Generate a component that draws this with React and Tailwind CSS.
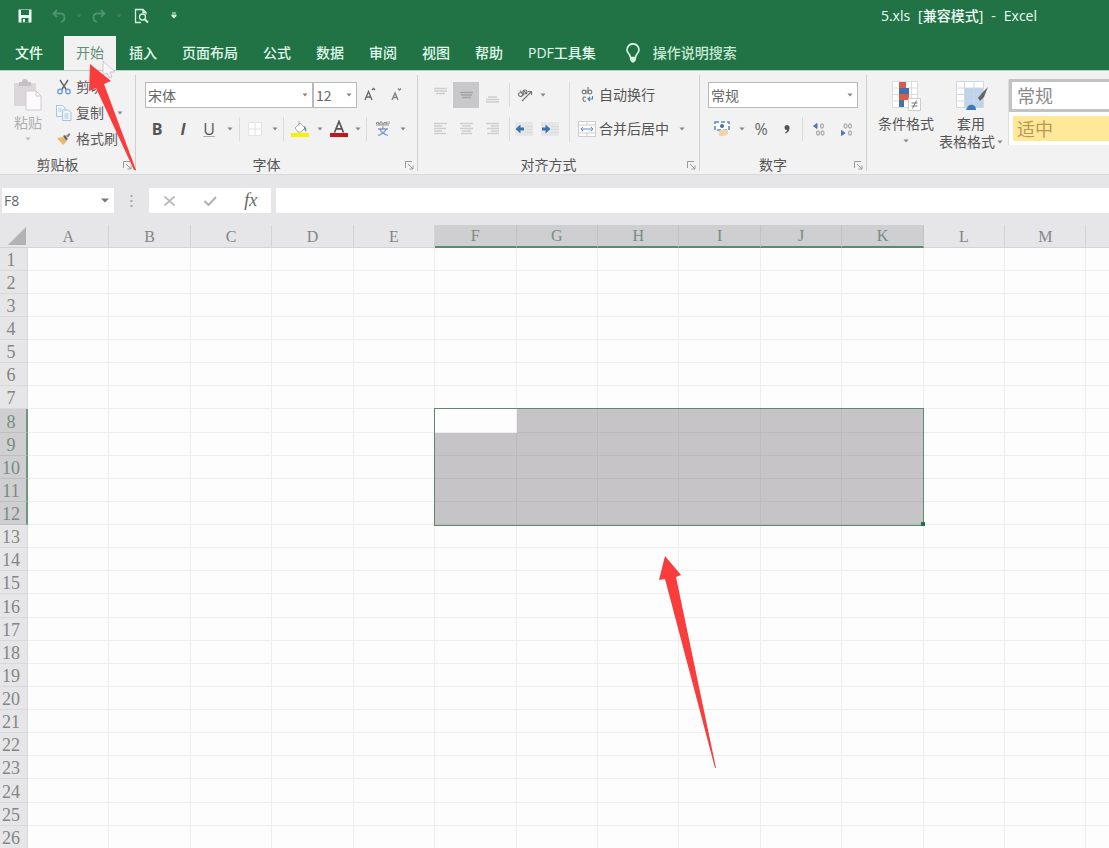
import React from "react";

const COLUMNS = ["A", "B", "C", "D", "E", "F", "G", "H", "I", "J", "K", "L", "M", ""];
const ROWS = Array.from({ length: 26 }, (_, i) => i + 1);
const TABS = ["文件", "开始", "插入", "页面布局", "公式", "数据", "审阅", "视图", "帮助", "PDF工具集"];

const colSelected = (c) => c >= 5 && c <= 10;
const rowSelected = (r) => r >= 8 && r <= 12;

function Caret({ className = "text-[#858585]" }) {
  return (
    <svg width="6" height="4" viewBox="0 0 6 4" className={className} aria-hidden="true">
      <path d="M0.5 0.5h5L3 3.5z" fill="currentColor" />
    </svg>
  );
}

function DropButton({ label, className = "w-3" }) {
  return (
    <button aria-label={label} className={`flex h-6 shrink-0 items-center justify-center ${className}`}>
      <Caret />
    </button>
  );
}

function ToolButton({ label, className = "w-[26px]", children }) {
  return (
    <button aria-label={label} className={`flex h-[26px] shrink-0 items-center justify-center ${className}`}>
      {children}
    </button>
  );
}

function Divider({ className = "mx-[2px]" }) {
  return <span className={`h-6 w-px shrink-0 bg-[#dcdcdc] ${className}`} />;
}

function Combo({ label, value, className }) {
  return (
    <label className={`relative block h-[26px] ${className}`}>
      <span className="sr-only">{label}</span>
      <select
        defaultValue={value}
        className="h-full w-full appearance-none overflow-visible border border-[#b9b9b9] bg-white py-0 pl-[2px] font-['Noto_Sans_CJK_SC',sans-serif] text-sm leading-6 text-[#666] outline-none"
      >
        <option>{value}</option>
      </select>
      <span className="pointer-events-none absolute inset-y-0 right-[5px] flex items-center">
        <Caret />
      </span>
    </label>
  );
}

function Group({ title, className = "", children }) {
  return (
    <section className="flex shrink-0">
      <div className={`flex flex-col ${className}`}>
        <div className="h-[85px] pt-[11px]">{children}</div>
        <div className="flex h-[18px] items-center">
          <h2 className="flex-1 pr-1 text-center text-sm leading-[18px] text-[#555]">{title}</h2>
          <button aria-label={`${title}设置`} className="flex w-4 justify-center">
            <svg width="9" height="9" viewBox="0 0 9 9" fill="none" stroke="#999" aria-hidden="true">
              <path d="M0.5 7V0.5H7M3 3l5 5M8 4.5V8H4.5" />
            </svg>
          </button>
        </div>
      </div>
      <span className="mt-1 h-[96px] w-px bg-[#d0d0d0]" />
    </section>
  );
}

function TitleBar() {
  return (
    <header className="flex h-9 items-center pr-[72px] pb-[5px] text-white">
      <div className="flex items-center pl-3">
        <ToolButton label="保存">
          <svg width="14" height="14" viewBox="0 0 14 14" aria-hidden="true">
            <path d="M0.5 0.5h13v13H0.5z" fill="#e8fff3" />
            <path d="M3 1h8v5H3zM3.5 9h7v4.5h-7z" fill="#217346" />
            <path d="M5 10h2v3H5z" fill="#e8fff3" />
          </svg>
        </ToolButton>
        <ToolButton label="撤消" className="ml-2 w-[26px]">
          <svg width="14" height="14" viewBox="0 0 14 14" fill="none" stroke="#4f9273" strokeWidth="1.8" aria-hidden="true">
            <path d="M5 1L1.5 4.5 5 8M2 4.500h6.500c5 0 5.500 7 0.500 8.500" />
          </svg>
        </ToolButton>
        <DropButton label="撤消选项" className="w-[14px] opacity-40" />
        <ToolButton label="恢复">
          <svg width="14" height="14" viewBox="0 0 14 14" fill="none" stroke="#4f9273" strokeWidth="1.8" aria-hidden="true">
            <path d="M9 1l3.500 3.500L9 8M12 4.500H5.500c-5 0-5.500 7-0.500 8.500" />
          </svg>
        </ToolButton>
        <DropButton label="恢复选项" className="w-[14px] opacity-40" />
        <ToolButton label="打印预览" className="ml-[2px] w-[26px]">
          <svg width="15" height="16" viewBox="0 0 15 16" fill="none" stroke="#d5f3e3" strokeWidth="1.3" aria-hidden="true">
            <path d="M7 14.500H1.500V1.500h7.500l3 3v2M9 1.500V4.500h3" />
            <circle cx="8.500" cy="9" r="3" />
            <path d="M10.700 11.200l3.300 3.300" strokeWidth="2" />
          </svg>
        </ToolButton>
        <button aria-label="自定义快速访问工具栏" className="ml-[10px] flex h-6 w-5 items-center justify-center">
          <svg width="6" height="7" viewBox="0 0 6 7" fill="#d5f3e3" aria-hidden="true">
            <path d="M1 0.500h4v1H1zM0.500 2.500h5v1.500L3 6.500 0.500 4z" />
          </svg>
        </button>
      </div>
      <h1 className="ml-auto flex gap-2 text-sm font-medium text-[#effff6]">
        <span>5.xls</span>
        <span>[兼容模式]</span>
        <span>-</span>
        <span>Excel</span>
      </h1>
    </header>
  );
}

function TabBar() {
  return (
    <nav className="flex h-[34px] gap-px text-sm font-medium">
      {TABS.map((t, i) => (
        <button
          key={t}
          className={
            i === 0
              ? "pr-5 pl-[15px] text-[#e8fff2]"
              : i === 1
                ? "bg-[#f3f2f3] px-3 font-normal text-[#5f8f76]"
                : "px-3 text-[#e0f8eb]"
          }
        >
          {t}
        </button>
      ))}
      <button className="flex items-center gap-[13px] pl-[17px] text-[#c8e8d8]">
        <svg width="14" height="20" viewBox="0 0 14 20" fill="none" stroke="#d5f5e4" strokeWidth="1.700" aria-hidden="true">
          <path d="M4.500 14.500C4.500 11 1 10.500 1 6.800a6 6 0 0 1 12 0C13 10.500 9.500 11 9.500 14.500z" />
          <path d="M4 14h6v3l-2 2.500H6L4 17z" fill="#d5f5e4" stroke="none" />
        </svg>
        操作说明搜索
      </button>
    </nav>
  );
}

function ClipboardGroup() {
  return (
    <Group title="剪贴板" className="w-[135px]">
      <div className="-mt-1 flex">
        <button className="flex w-14 flex-col items-center text-sm leading-5 text-[#b0b0b0]">
          <svg width="30" height="34" viewBox="0 0 30 34" aria-hidden="true">
            <path d="M1 5h22v23H1z" fill="#dcd7db" />
            <path d="M6 4h3a3 3 0 0 1 6 0h3v4H6z" fill="#c4c1c4" />
            <path d="M13 13h10l5 5v14H13z" fill="#fcfafc" stroke="#d0ccd0" />
            <path d="M23 13v5h5" fill="none" stroke="#d0ccd0" />
          </svg>
          <span className="mt-px">粘贴</span>
          <span className="flex h-3 items-center">
            <Caret className="text-[#bbb]" />
          </span>
        </button>
        <div className="flex flex-col text-sm text-[#5c5c5c]">
          <button className="-mt-1 flex h-[26px] items-center gap-1">
            <svg width="16" height="16" viewBox="0 0 16 16" fill="none" aria-hidden="true">
              <path d="M4 1l6.500 10M12 1L5.500 11" stroke="#5d6570" strokeWidth="1.400" />
              <circle cx="4" cy="12.500" r="2.200" stroke="#6fa0cf" strokeWidth="1.400" />
              <circle cx="12" cy="12.500" r="2.200" stroke="#6fa0cf" strokeWidth="1.400" />
            </svg>
            剪切
          </button>
          <div className="flex items-center">
            <button className="flex h-[26px] items-center gap-1">
              <svg width="16" height="16" viewBox="0 0 16 16" fill="#eef5fc" stroke="#a9c4de" aria-hidden="true">
                <path d="M0.500 0.500h6l2.500 2.500v8.500H0.500z" />
                <path d="M6.500 5h6l2.500 2.500v8H6.500z" />
                <path d="M8.500 9h4M8.500 11h4M8.500 13h4M2.500 4h3M2.500 6h3" />
              </svg>
              复制
            </button>
            <DropButton label="复制选项" className="ml-[10px] w-3" />
          </div>
          <button className="flex h-[26px] items-center gap-1">
            <svg width="16" height="16" viewBox="0 0 16 16" aria-hidden="true">
              <path d="M1 7l6-1 4 4-4 4z" fill="#edb868" />
              <path d="M7 5l2-1 3 4-2 1.500z" fill="#666" />
              <path d="M10 5l3-3 1.500 1.500-2.500 3z" fill="#888" />
            </svg>
            格式刷
          </button>
        </div>
      </div>
    </Group>
  );
}

function FontGroup() {
  return (
    <Group title="字体" className="w-[281px]">
      <div className="flex pl-[9px]">
        <Combo label="字体" value="宋体" className="w-[168px]" />
        <Combo label="字号" value="12" className="w-11" />
        <ToolButton label="增大字号">
          <svg width="12" height="16" viewBox="0 0 12 16" fill="none" stroke="#6a6a6a" strokeWidth="1.400" aria-hidden="true">
            <path d="M1 13l3.500-8.500L8 13M2.300 10h4.400M8 3l1.500-1.500L11 3" />
          </svg>
        </ToolButton>
        <ToolButton label="减小字号">
          <svg width="12" height="16" viewBox="0 0 12 16" fill="none" stroke="#808080" strokeWidth="1.300" aria-hidden="true">
            <path d="M2 13l3-7L8 13M3 10.500h4M8 1.500L9.500 3 11 1.500" />
          </svg>
        </ToolButton>
      </div>
      <div className="mt-2 flex items-center pl-2 text-base leading-6 text-[#555]">
        <ToolButton label="加粗">
          <b>B</b>
        </ToolButton>
        <ToolButton label="倾斜">
          <i className="font-bold">I</i>
        </ToolButton>
        <ToolButton label="下划线">
          <u className="decoration-[#aaa]">U</u>
        </ToolButton>
        <DropButton label="下划线选项" className="w-4" />
        <Divider className="mx-px" />
        <ToolButton label="边框" className="w-7">
          <svg width="14" height="14" viewBox="0 0 14 14" fill="#fff" stroke="#e2e2e2" aria-hidden="true">
            <path d="M0.500 0.500h13v13H0.500zM7 0.500v13M0.500 7h13" />
          </svg>
        </ToolButton>
        <DropButton label="边框选项" />
        <Divider />
        <ToolButton label="填充颜色" className="w-7">
          <svg width="18" height="18" viewBox="0 0 18 18" aria-hidden="true">
            <path d="M4 8l5-5 5 5-4 4H7z" fill="#fff" stroke="#a9a9a9" />
            <path d="M8 1v5" stroke="#a9a9a9" />
            <path d="M13 6q3 1 2 6-2-2-2-6z" fill="#5a86b5" />
            <path d="M0 13h18v4H0z" fill="#f8f200" />
          </svg>
        </ToolButton>
        <DropButton label="填充颜色选项" />
        <ToolButton label="字体颜色">
          <svg width="18" height="18" viewBox="0 0 18 18" fill="none" aria-hidden="true">
            <path d="M4.500 12.500L9 1.500l4.500 11M6 8.800h6" stroke="#555" strokeWidth="1.700" />
            <path d="M0 13h18v4H0z" fill="#c8141c" />
          </svg>
        </ToolButton>
        <DropButton label="字体颜色选项" />
        <Divider />
        <ToolButton label="拼音指南" className="w-7">
          <svg width="14" height="16" viewBox="0 0 14 16" fill="none" aria-hidden="true">
            <path d="M0.500 3V1.500h2V3h1.500V1h2v2h2V1.500h2V3h1V0.500M13 0.500V3M0 4h13" stroke="#8b8b8b" />
            <path d="M7 5.500v2M2 8h10M4 8.500q2 4 8 6M10 8.500q-2 4-8 6" stroke="#7b9bc9" strokeWidth="1.300" />
          </svg>
        </ToolButton>
        <DropButton label="拼音选项" />
      </div>
    </Group>
  );
}

const LINES = {
  top: "M1 1.500h13M1 4h13M3 6.500h9",
  middle: "M1 5.500h13M2 8h11M3 10.500h9",
  bottom: "M3 10h9M1 12.500h13M1 15h13",
  left: "M1 2.500h13M1 5h8M1 7.500h12M1 10h8M1 12.500h12",
  center: "M1 2.500h13M3 5h9M1 7.500h13M3 10h9M2 12.500h11",
  right: "M1 2.500h13M6 5h8M2 7.500h12M6 10h8M2 12.500h12",
};

function LinesIcon({ kind, className = "text-[#cecece]" }) {
  return (
    <svg width="15" height="16" viewBox="0 0 15 16" fill="none" stroke="currentColor" strokeWidth="1.600" className={className} aria-hidden="true">
      <path d={LINES[kind]} />
    </svg>
  );
}

function IndentIcon({ inward }) {
  return (
    <svg width="18" height="14" viewBox="0 0 18 14" aria-hidden="true">
      <path d="M0 0h18v14H0z" fill="#e6e6e6" />
      <path d="M10 4.500h8M10 7.500h8M10 10.500h8" stroke="#dadada" fill="none" />
      <path d={inward ? "M1 7h6" : "M9 7H3"} stroke="#3974ae" strokeWidth="3" fill="none" />
      <path d={inward ? "M4.500 2.500L9.500 7l-5 4.500z" : "M5.500 2.500L0.500 7l5 4.500z"} fill="#3974ae" />
    </svg>
  );
}

function AlignGroup() {
  return (
    <Group title="对齐方式" className="w-[281px]">
      <div className="flex pl-[9px]">
        <div className="flex flex-col gap-2">
          <div className="flex">
            <ToolButton label="顶端对齐"><LinesIcon kind="top" /></ToolButton>
            <ToolButton label="垂直居中" className="w-[26px] bg-[#c8c7c9]">
              <LinesIcon kind="middle" className="text-[#a3a2a4]" />
            </ToolButton>
            <ToolButton label="底端对齐"><LinesIcon kind="bottom" /></ToolButton>
          </div>
          <div className="flex">
            <ToolButton label="左对齐"><LinesIcon kind="left" /></ToolButton>
            <ToolButton label="居中"><LinesIcon kind="center" /></ToolButton>
            <ToolButton label="右对齐"><LinesIcon kind="right" /></ToolButton>
          </div>
        </div>
        <div className="ml-[3px] flex flex-col gap-2">
          <div className="flex items-center">
            <Divider className="mx-px" />
            <ToolButton label="方向" className="w-7">
              <svg width="16" height="16" viewBox="0 0 16 16" fill="none" stroke="#777" strokeWidth="1.200" aria-hidden="true">
                <circle cx="3.500" cy="7.500" r="2" />
                <path d="M3 3.500l4 5M6 3l4 4" />
                <circle cx="8" cy="5" r="2" />
                <path d="M5 14l9-9M11 4.500h3.500V8" />
              </svg>
            </ToolButton>
            <DropButton label="方向选项" className="w-2" />
          </div>
          <div className="flex items-center">
            <Divider className="mx-px" />
            <ToolButton label="减少缩进"><IndentIcon /></ToolButton>
            <ToolButton label="增加缩进"><IndentIcon inward /></ToolButton>
          </div>
        </div>
        <span className="ml-[6px] h-[60px] w-px bg-[#dcdcdc]" />
        <div className="ml-2 flex flex-col gap-2 text-sm text-[#555]">
          <button className="flex h-[26px] items-center gap-[3px]">
            <svg width="18" height="18" viewBox="0 0 18 18" fill="none" stroke="#7b7b7b" strokeWidth="1.200" aria-hidden="true">
              <circle cx="6" cy="6" r="1.800" />
              <path d="M8 4v4M10 1v7" />
              <circle cx="12" cy="6" r="1.800" />
              <path d="M8 11.500q-3-1.500-3 1.500t3 2" />
              <path d="M14.500 10v3h-4M12 11l-2 2 2 2" stroke="#4f86ba" />
            </svg>
            自动换行
          </button>
          <div className="flex items-center">
            <button className="flex h-[26px] items-center gap-[3px]">
              <svg width="18" height="16" viewBox="0 0 18 16" fill="#fff" stroke="#cdcdcd" aria-hidden="true">
                <path d="M0.500 0.500h17v15H0.500zM0.500 4h17M0.500 12h17M9 0.500V4M9 12v3.500" />
                <path d="M3 8h12M5 6L3 8l2 2M13 6l2 2-2 2" stroke="#5a8dc0" fill="none" />
              </svg>
              合并后居中
            </button>
            <DropButton label="合并选项" className="ml-[7px] w-3" />
          </div>
        </div>
      </div>
    </Group>
  );
}

function NumberGroup() {
  return (
    <Group title="数字" className="w-[166px]">
      <div className="pl-2">
        <Combo label="数字格式" value="常规" className="w-[150px]" />
        <div className="mt-2 flex items-center text-base leading-6 text-[#666]">
          <ToolButton label="会计数字格式" className="w-7">
            <svg width="16" height="16" viewBox="0 0 16 16" fill="none" aria-hidden="true">
              <path d="M1 1h14v8H1z" fill="#fff" stroke="#5a8dc0" strokeWidth="1.600" strokeDasharray="4 2" />
              <circle cx="8" cy="5" r="2" fill="#456f9e" />
              <path d="M5 10q3-3 9-1v4q-4 3-9 2z" fill="#f4d3ae" />
            </svg>
          </ToolButton>
          <DropButton label="会计格式选项" />
          <ToolButton label="百分比样式">%</ToolButton>
          <ToolButton label="千位分隔样式">
            <svg width="6" height="9" viewBox="0 0 6 9" fill="#555" aria-hidden="true">
              <path d="M3 0a2.500 2.500 0 0 1 2.500 3q0 4-4 5.500L1 7.500Q3 6.500 3 5A2.500 2.500 0 0 1 3 0z" />
            </svg>
          </ToolButton>
          <Divider />
          <ToolButton label="增加小数位数" className="w-7">
            <svg width="12" height="13" viewBox="0 0 12 13" fill="none" stroke="#b0b0b0" strokeWidth="1.300" aria-hidden="true">
              <path d="M0.500 3L4 0.500v5z" fill="#4f78b8" stroke="#4f78b8" strokeWidth="1" />
              <ellipse cx="9" cy="3" rx="1.500" ry="2" />
              <ellipse cx="5" cy="10" rx="1.500" ry="2" />
              <ellipse cx="9.500" cy="10" rx="1.500" ry="2" />
            </svg>
          </ToolButton>
          <ToolButton label="减少小数位数">
            <svg width="13" height="13" viewBox="0 0 13 13" fill="none" stroke="#b0b0b0" strokeWidth="1.300" aria-hidden="true">
              <ellipse cx="5.500" cy="3" rx="1.500" ry="2" />
              <ellipse cx="10" cy="3" rx="1.500" ry="2" />
              <path d="M5 10L1.500 7.500v5z" fill="#4f78b8" stroke="#4f78b8" strokeWidth="1" />
              <ellipse cx="10" cy="10" rx="1.500" ry="2" />
            </svg>
          </ToolButton>
        </div>
      </div>
    </Group>
  );
}

function StylesGroup() {
  return (
    <section className="flex min-w-0 flex-1 overflow-hidden pt-2 text-sm text-[#555]">
      <button className="ml-[10px] flex w-[58px] shrink-0 flex-col items-center leading-[18px]">
        <svg width="30" height="30" viewBox="0 0 30 30" className="mt-[2px]" aria-hidden="true">
          <path d="M1 1h26v25H1z" fill="#fff" />
          <path d="M1.500 0.500h25v26h-25zM1 7h26M1 13.500h26M1 20h26M20.500 1v26" fill="none" stroke="#dcdcdc" />
          <path d="M8 1h7v6H8zM8 13h10v6H8z" fill="#d95c4b" />
          <path d="M8 7h10v6H8zM8 19h5v7H8z" fill="#4472a8" />
          <path d="M17.500 17.500h12v12h-12z" fill="#fff" stroke="#ccc" />
          <path d="M20.500 22h6M20.500 25h6M25.500 19.500l-4 8" stroke="#777" fill="none" />
        </svg>
        <span className="mt-1">条件格式</span>
        <span className="flex h-4 items-center">
          <Caret />
        </span>
      </button>
      <button className="ml-1 flex w-[65px] shrink-0 flex-col items-start leading-[18px]">
        <svg width="32" height="30" viewBox="0 0 32 30" className="mt-[2px] ml-[17px]" aria-hidden="true">
          <path d="M0.500 0.500h27v26h-27z" fill="#fff" />
          <path d="M9 7h18v19H9z" fill="#bcd3ee" />
          <path d="M0.500 0.500h27v26h-27zM0 7h27M0 13.500h27M0 20h27M8.500 0v26M18 0v26" fill="none" stroke="#d2d7dd" />
          <path d="M32 6l-4 10-4 4-2-3 4-5z" fill="#666" />
          <path d="M10 29q2-6 7-5 3 1 3 5z" fill="#3d78ba" />
        </svg>
        <span className="mt-1 ml-[18px]">套用</span>
        <span className="flex items-center gap-[2px] whitespace-nowrap">
          表格格式
          <Caret />
        </span>
      </button>
      <div className="ml-1 flex h-[66px] min-w-0 flex-1 flex-col gap-1 border-l border-[#ddd] bg-white text-lg">
        <button className="h-[33px] shrink-0 border-[3px] border-r-0 border-[#c3c3c3] bg-white pl-[5px] text-left leading-6 text-[#8a8a8a]">
          常规
        </button>
        <button className="ml-1 h-[25px] shrink-0 bg-[#ffe999] pl-1 text-left leading-[22px] text-[#b8975a]">适中</button>
      </div>
    </section>
  );
}

function FormulaBar() {
  return (
    <div className="flex h-[50px] items-start bg-[#e6e5e7] pt-[13px]">
      <label className="relative ml-[2px] block h-[25px] w-28 shrink-0">
        <span className="sr-only">名称框</span>
        <input defaultValue="F8" className="h-full w-full bg-white pl-[2px] text-sm text-[#666] outline-none" />
        <svg width="8" height="5" viewBox="0 0 8 5" className="absolute top-[10px] right-[5px]" fill="#777" aria-hidden="true">
          <path d="M0 0.500h8L4 4.500z" />
        </svg>
      </label>
      <svg width="3" height="25" viewBox="0 0 3 25" className="ml-4 shrink-0" fill="#a9a9a9" aria-hidden="true">
        <path d="M0.500 7h2v2h-2zM0.500 12h2v2h-2zM0.500 17h2v2h-2z" />
      </svg>
      <div className="ml-4 flex h-[25px] w-[122px] shrink-0 bg-white">
        <button aria-label="取消" className="flex flex-1 items-center justify-center">
          <svg width="11" height="10" viewBox="0 0 11 10" stroke="#b5b5b5" strokeWidth="1.600" aria-hidden="true">
            <path d="M0.500 0.500l10 9M10.500 0.500l-10 9" />
          </svg>
        </button>
        <button aria-label="输入" className="flex flex-1 items-center justify-center">
          <svg width="13" height="10" viewBox="0 0 13 10" fill="none" stroke="#b0b0b0" strokeWidth="2" aria-hidden="true">
            <path d="M0.500 5l4 4L12 1" />
          </svg>
        </button>
        <button aria-label="插入函数" className="flex-1 pb-[2px] font-['Liberation_Serif',serif] text-lg leading-5 text-[#666] italic">
          fx
        </button>
      </div>
      <input aria-label="编辑栏" className="ml-[5px] h-[25px] min-w-0 flex-1 bg-white outline-none" />
    </div>
  );
}

function Sheet() {
  return (
    <div className="relative min-h-0 flex-1 overflow-hidden bg-[#fefdfe]">
      <table className="w-[1168px] table-fixed border-separate border-spacing-0 font-['Liberation_Serif',serif] text-[#858585]">
        <thead>
          <tr className="h-[23px]">
            <th className="w-7 border-b border-[#cfcfd0] bg-[#e6e5e7] p-0">
              <svg width="18" height="18" viewBox="0 0 18 18" className="ml-2" fill="#b2b1b3" aria-hidden="true">
                <path d="M18 0v18H0z" />
              </svg>
            </th>
            {COLUMNS.map((c, i) => (
              <th
                key={i}
                className={
                  colSelected(i)
                    ? "border-r border-b-2 border-r-[#c2c2c3] border-b-[#5b8a70] bg-[#cfced0] p-0 pt-px text-base leading-5 font-normal text-[#788c82]"
                    : "border-r border-b border-[#d4d3d5] bg-[#e6e5e7] p-0 pt-[2px] text-base leading-5 font-normal"
                }
              >
                {c}
              </th>
            ))}
          </tr>
        </thead>
        <tbody>
          {ROWS.map((r) => (
            <tr key={r} className={r % 8 === 0 ? "h-6" : "h-[23px]"}>
              <th
                className={
                  rowSelected(r)
                    ? "border-r-2 border-b border-r-[#6f9681] border-b-[#bfbec0] bg-[#cfced0] p-0 pt-[2px] pr-1 text-lg leading-5 font-normal text-[#788c82]"
                    : "border-r border-b border-[#d9d8da] bg-[#e6e5e7] p-0 pt-[2px] pr-[5px] text-lg leading-5 font-normal"
                }
              >
                {r}
              </th>
              {COLUMNS.map((_, i) => (
                <td
                  key={i}
                  className={
                    rowSelected(r) && colSelected(i) && !(r === 8 && i === 5)
                      ? "border-r border-b border-[#bcbabd] bg-[#c6c4c7] p-0"
                      : "border-r border-b border-[#eeeeef] p-0"
                  }
                />
              ))}
            </tr>
          ))}
        </tbody>
      </table>
      <div className="absolute top-[183px] left-[434px] h-[118px] w-[490px] border border-[#5a8a70]">
        <span className="absolute -right-[2px] -bottom-[1px] size-1 bg-[#217346]" />
      </div>
    </div>
  );
}

function Annotations() {
  return (
    <>
      <svg width="52" height="112" viewBox="0 0 52 112" className="pointer-events-none absolute top-[60px] left-[86px]" aria-hidden="true">
        <path d="M17 1v14l4-2 3 5 2-1-2-5h5z" fill="#faf7f8" stroke="#d3c6ca" />
        <path d="M4 4L25 21 18 24 50 110 48 110 10 28 3 31z" fill="#f93c3c" />
      </svg>
      <svg width="60" height="216" viewBox="0 0 60 216" className="pointer-events-none absolute top-[554px] left-[658px]" aria-hidden="true">
        <path d="M7 2L23 21 18 23 58 214 57 214 7 25 1 26z" fill="#f93c3c" />
      </svg>
    </>
  );
}

export default function App() {
  return (
    <main className="relative flex h-screen flex-col overflow-hidden bg-[#e6e5e7] font-['Open_Sans','Noto_Sans_CJK_SC',sans-serif]">
      <div className="shrink-0 bg-[#217346]">
        <TitleBar />
        <TabBar />
      </div>
      <div className="flex h-[105px] shrink-0 border-t border-b border-t-[#b5d2c2] border-b-[#d9d8da] bg-[#f3f2f3]">
        <ClipboardGroup />
        <FontGroup />
        <AlignGroup />
        <NumberGroup />
        <StylesGroup />
      </div>
      <FormulaBar />
      <Sheet />
      <Annotations />
    </main>
  );
}
